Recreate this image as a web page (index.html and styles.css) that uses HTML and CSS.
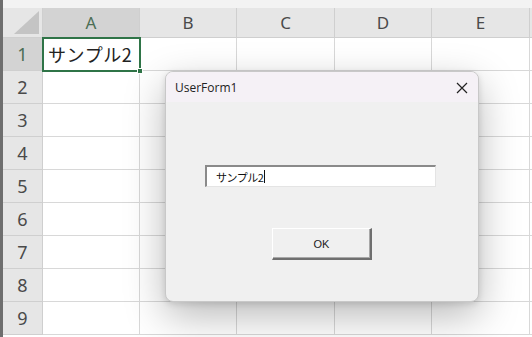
FILE: index.html
```html
<!DOCTYPE html>
<html lang="ja">
<head>
  <meta charset="UTF-8" />
  <title>UserForm1</title>
  <link rel="stylesheet" href="styles.css">
</head>
<body>
  <div class="window">
    <div class="top-strip"></div>
    <div class="sheet">
      <div class="corner"></div>
      <div class="col-head active">A</div>
      <div class="col-head">B</div>
      <div class="col-head">C</div>
      <div class="col-head">D</div>
      <div class="col-head">E</div>
      <div class="col-head rest"></div>

      <div class="row-head active">1</div>
      <div class="cell selected">サンプル2<span class="fill-handle"></span></div>
      <div class="cell"></div><div class="cell"></div><div class="cell"></div><div class="cell"></div><div class="cell"></div>

      <div class="row-head">2</div>
      <div class="cell"></div><div class="cell"></div><div class="cell"></div><div class="cell"></div><div class="cell"></div><div class="cell"></div>
      <div class="row-head">3</div>
      <div class="cell"></div><div class="cell"></div><div class="cell"></div><div class="cell"></div><div class="cell"></div><div class="cell"></div>
      <div class="row-head">4</div>
      <div class="cell"></div><div class="cell"></div><div class="cell"></div><div class="cell"></div><div class="cell"></div><div class="cell"></div>
      <div class="row-head">5</div>
      <div class="cell"></div><div class="cell"></div><div class="cell"></div><div class="cell"></div><div class="cell"></div><div class="cell"></div>
      <div class="row-head">6</div>
      <div class="cell"></div><div class="cell"></div><div class="cell"></div><div class="cell"></div><div class="cell"></div><div class="cell"></div>
      <div class="row-head">7</div>
      <div class="cell"></div><div class="cell"></div><div class="cell"></div><div class="cell"></div><div class="cell"></div><div class="cell"></div>
      <div class="row-head">8</div>
      <div class="cell"></div><div class="cell"></div><div class="cell"></div><div class="cell"></div><div class="cell"></div><div class="cell"></div>
      <div class="row-head">9</div>
      <div class="cell"></div><div class="cell"></div><div class="cell"></div><div class="cell"></div><div class="cell"></div><div class="cell"></div>
    </div>

    <div class="dialog">
      <div class="dialog-title">
        <span>UserForm1</span>
        <svg class="close" width="12" height="12" viewBox="0 0 12 12">
          <path d="M1 1 L11 11 M11 1 L1 11" stroke="#222" stroke-width="1.2" fill="none"/>
        </svg>
      </div>
      <div class="dialog-body">
        <div class="textbox">サンプル2<span class="caret"></span></div>
        <div class="ok-btn">OK</div>
      </div>
    </div>
  </div>
</body>
</html>
```

FILE: styles.css
```css
* {
    margin: 0;
    padding: 0;
    box-sizing: border-box;
}
body {
    width: 532px;
    height: 337px;
    overflow: hidden;
    background: #ffffff;
    font-family: "Noto Sans", "Noto Sans CJK JP", sans-serif;
}
.window {
    position: relative;
    width: 532px;
    height: 337px;
    border-left: 3px solid #6e6e6e;
    overflow: hidden;
}
.top-strip {
    height: 8px;
    background: #f3f3f3;
}
.sheet {
    display: grid;
    grid-template-columns: 40px 97px 97px 98px 97px 98px 40px;
    grid-template-rows: 30px repeat(9, 33px);
}
.corner {
    background: #e6e6e6;
    border-right: 1px solid #cfcfcf;
    border-bottom: 1px solid #cfcfcf;
    position: relative;
}
.corner::after {
    content: "";
    position: absolute;
    right: 3px;
    bottom: 3px;
    width: 0;
    height: 0;
    border-left: 25px solid transparent;
    border-bottom: 23px solid #c4c4c4;
}
.col-head {
    background: #e6e6e6;
    border-right: 1px solid #cfcfcf;
    border-bottom: 1px solid #cfcfcf;
    display: flex;
    align-items: center;
    justify-content: center;
    font-size: 17px;
    color: #4a4a4a;
}
.col-head.active {
    background: #d3d3d3;
    color: #4b6e55;
    border-bottom: 1px solid #bdbdbd;
}
.row-head {
    background: #e6e6e6;
    border-right: 1px solid #cfcfcf;
    border-bottom: 1px solid #cfcfcf;
    display: flex;
    align-items: center;
    justify-content: center;
    font-size: 18px;
    color: #4a4a4a;
}
.row-head.active {
    background: #d3d3d3;
    color: #4b6e55;
}
.cell {
    border-right: 1px solid #d8d8d8;
    border-bottom: 1px solid #d8d8d8;
}
.cell.selected {
    position: relative;
    outline: 2px solid #2f7447;
    outline-offset: -1px;
    font-family: "Noto Sans CJK JP", sans-serif;
    font-size: 18px;
    color: #222;
    padding-left: 5px;
    line-height: 32px;
    letter-spacing: 0.6px;
    z-index: 1;
}
.fill-handle {
    position: absolute;
    right: -4px;
    bottom: -4px;
    width: 6px;
    height: 6px;
    background: #2f7447;
    border: 1px solid #fff;
}

/* UserForm */
.dialog {
    position: absolute;
    left: 162px;
    top: 71px;
    width: 314px;
    height: 231px;
    background: #f0f0f0;
    border: 1px solid #c8c8c8;
    border-radius: 8px;
    overflow: hidden;
    box-shadow: 0 14px 40px rgba(0, 0, 0, 0.28), 0 2px 6px rgba(0, 0, 0, 0.12);
    display: flex;
    flex-direction: column;
    z-index: 2;
}
.dialog-title {
    height: 30px;
    background: #f5f1f6;
    display: flex;
    align-items: center;
    justify-content: space-between;
    padding: 0 10px 0 9px;
    font-family: "Open Sans", "Noto Sans", sans-serif;
    font-size: 12px;
    color: #222;
}
.close {
    margin-top: 1px;
}
.dialog-body {
    flex: 1;
    display: flex;
    flex-direction: column;
    align-items: center;
    padding-top: 63px;
}
.textbox {
    width: 231px;
    height: 22px;
    margin-right: 3px;
    background: #fff;
    border-top: 2px solid #8a8a8a;
    border-left: 2px solid #8a8a8a;
    border-right: 1px solid #e4e4e4;
    border-bottom: 1px solid #e4e4e4;
    font-family: "Noto Sans CJK JP", sans-serif;
    font-size: 11px;
    color: #111;
    padding-left: 9px;
    line-height: 18px;
    display: flex;
    align-items: center;
    letter-spacing: -0.5px;
}
.caret {
    display: inline-block;
    width: 1px;
    height: 13px;
    background: #111;
    margin-left: 1px;
}
.ok-btn {
    margin-top: 41px;
    width: 100px;
    height: 32px;
    background: #f0f0f0;
    border-top: 1px solid #ffffff;
    border-left: 1px solid #ffffff;
    border-right: 2px solid #6f6f6f;
    border-bottom: 2px solid #6f6f6f;
    box-shadow: inset -1px -1px 0 #a8a8a8;
    display: flex;
    align-items: center;
    justify-content: center;
    font-family: "Liberation Sans", sans-serif;
    font-size: 11px;
    color: #222;
}
```
